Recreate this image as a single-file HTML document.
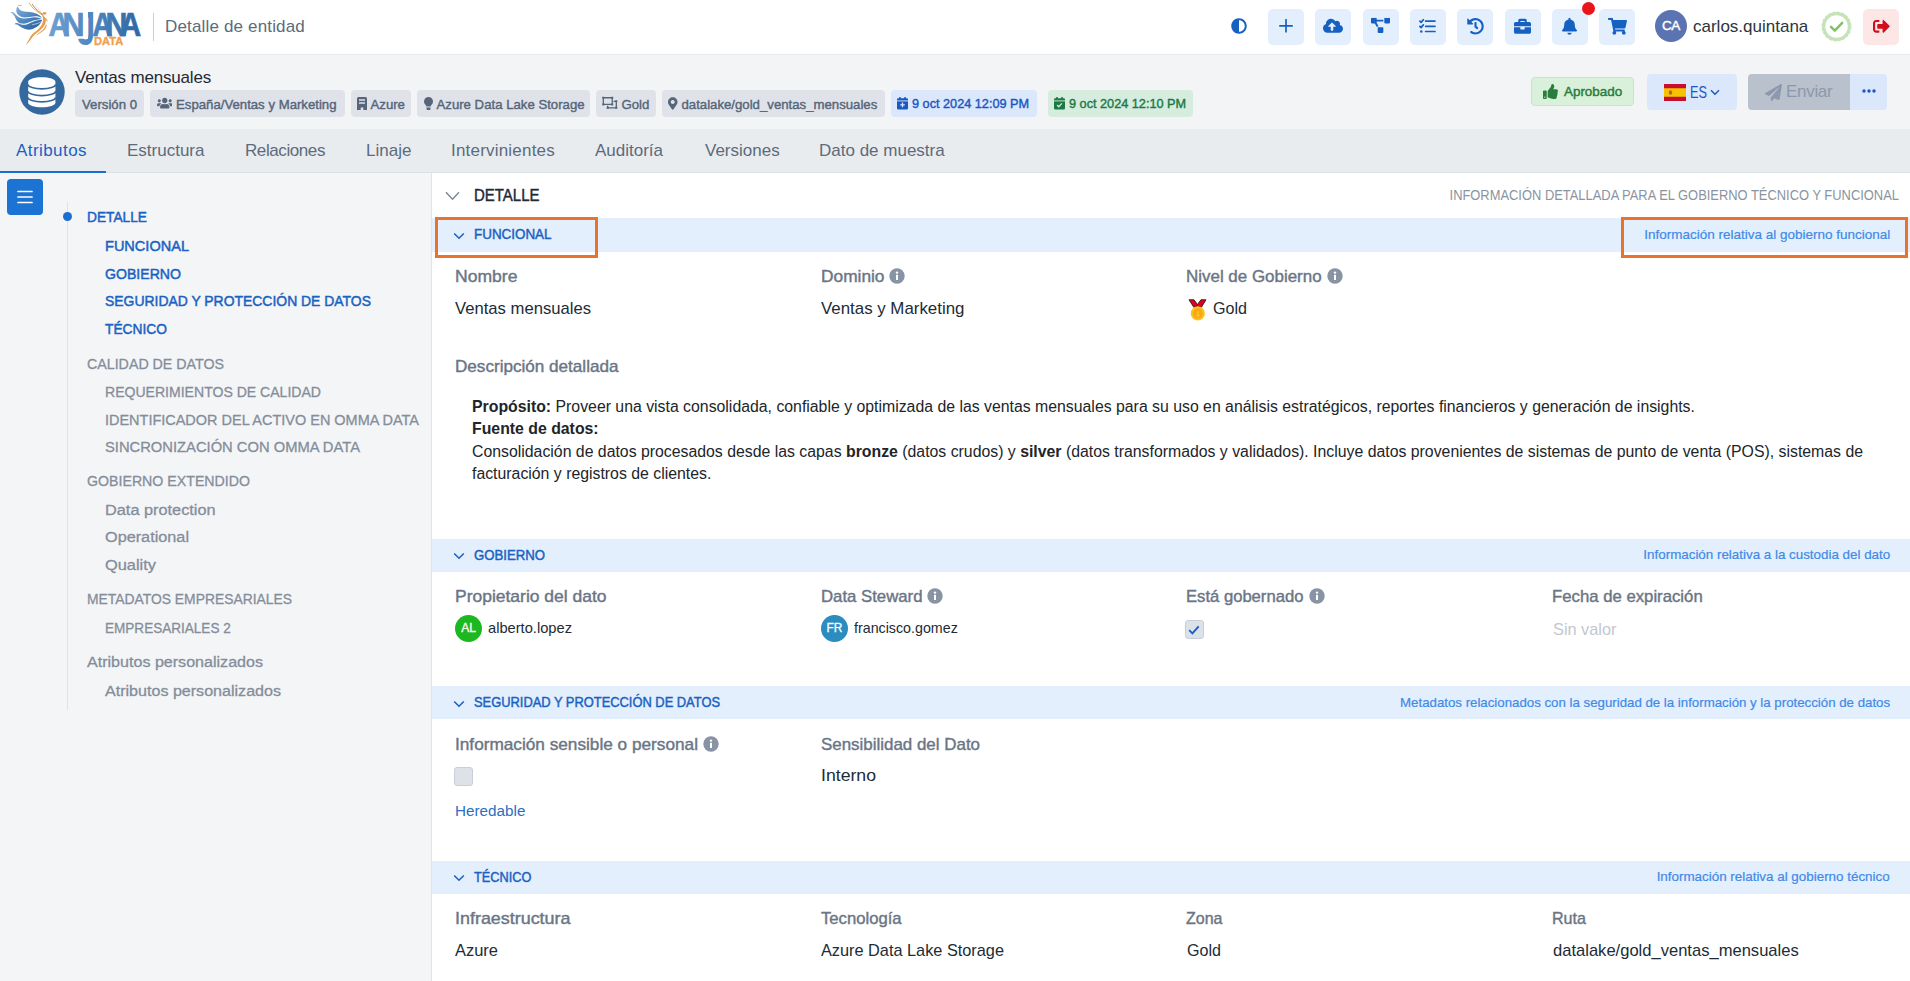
<!DOCTYPE html>
<html lang="es">
<head>
<meta charset="utf-8">
<title>Detalle de entidad</title>
<style>
*{box-sizing:border-box;margin:0;padding:0}
html,body{width:1910px;height:981px;overflow:hidden;background:#f3f4f6;font-family:"Liberation Sans",sans-serif;color:#212b36}
.abs{position:absolute}
.nw{white-space:nowrap}
.sb{-webkit-text-stroke:.45px currentColor}
/* ---------- top bar ---------- */
#top{position:absolute;left:0;top:0;width:1910px;height:55px;background:#fff;border-bottom:1px solid #e6e9ee}
#top .divider{position:absolute;left:153px;top:13px;width:1px;height:28px;background:#c9d0d9}
#top .ptitle{position:absolute;left:165px;top:16px;font-size:17px;line-height:22px;color:#5b6b7c;letter-spacing:.16px;white-space:nowrap}
.tbtn{position:absolute;top:9px;width:36px;height:36px;border-radius:5px;background:#e3effd;display:flex;align-items:center;justify-content:center}
.tbtn svg{display:block;transform:translateY(-1.200px)}
/* ---------- entity bar ---------- */
#ent{position:absolute;left:0;top:56px;width:1910px;height:73px;background:#f3f4f6}
.chip{position:absolute;top:34px;height:27px;border-radius:4px;background:#dfe3e9;color:#56657a;font-size:13.2px;line-height:27px;white-space:nowrap;-webkit-text-stroke:.4px currentColor}
.chip svg{position:absolute}
.chip span{position:absolute;top:.500px}
/* ---------- tabs ---------- */
#tabs{z-index:2;position:absolute;left:0;top:129px;width:1910px;height:44px;background:#e9ecef;border-bottom:1px solid #dde1e6}
#tabs .tab{position:absolute;top:11px;font-size:17px;line-height:22px;color:#5b6b7c;white-space:nowrap}
#tabs .tab.on{color:#1a5fc4}
#tabs .ul{position:absolute;left:0;top:42.400px;width:106px;height:2px;background:#1d6cd2}
/* ---------- sidebar ---------- */
#side{position:absolute;left:0;top:173px;width:431px;height:808px;background:#f4f5f7}
#side .menu{position:absolute;left:7px;top:5.500px;width:36px;height:36px;border-radius:4px;background:#1b73d3}
#side .vline{position:absolute;left:66.600px;top:29px;width:1px;height:508px;background:#dfe3e8}
#side .dot{position:absolute;left:62.700px;top:39.400px;width:9px;height:9px;border-radius:50%;background:#1b6fd0}
.ti{position:absolute;font-size:15.5px;line-height:20px;white-space:nowrap;color:#848d9a;-webkit-text-stroke:.3px currentColor}
.ti.b{color:#1a62c2;-webkit-text-stroke:.5px currentColor}
.ti.g{left:86.600px}
.ti.s{left:104.600px}
/* ---------- content ---------- */
#main{position:absolute;left:431px;top:173px;width:1479px;height:808px;background:#fff;border-left:1px solid #e1e5ea}
.bar{position:absolute;left:0;width:1478px;height:34px;background:#e4effd}
.bar .t{position:absolute;left:42px;top:6.300px;font-size:13.900px;line-height:20px;color:#1a62c2;white-space:nowrap;-webkit-text-stroke:.45px currentColor}
.bar .r{position:absolute;right:20px;top:7.600px;font-size:12.8px;line-height:18px;color:#3f8ae8;white-space:nowrap;-webkit-text-stroke:.2px currentColor}
.bar svg{position:absolute;left:21.200px;top:13.400px}
.lb{position:absolute;font-size:16.4px;line-height:22px;color:#6a7585;white-space:nowrap;-webkit-text-stroke:.4px currentColor}
.vl{position:absolute;font-size:17px;line-height:22px;color:#212b36;white-space:nowrap}
.info{display:inline-block;vertical-align:-2px;margin-left:5px}
.hl{position:absolute;border:3px solid #e9732c}
.av{position:absolute;width:27px;height:27px;border-radius:50%;color:#fff;font-size:12px;line-height:27px;text-align:center;-webkit-text-stroke:.3px currentColor}
.un{position:absolute;font-size:15px;line-height:20px;color:#212b36;white-space:nowrap}
.cb{position:absolute;width:19px;height:19px;border-radius:3px;background:#dde1e8;border:1px solid #c9cfd8}
#desc{position:absolute;left:40px;top:222.500px;width:1420px;font-size:15.830px;line-height:22.550px;color:#212529}
#desc b{font-weight:700}
</style>
</head>
<body>
<!-- TOP BAR -->
<div id="top">
  <svg id="logo" class="abs" style="left:0;top:0" width="150" height="55" viewBox="0 0 150 55">
  <defs>
    <linearGradient id="lg1" gradientUnits="userSpaceOnUse" x1="49" y1="0" x2="141" y2="0"><stop offset="0" stop-color="#6ea0d2"/><stop offset=".5" stop-color="#4c84bd"/><stop offset="1" stop-color="#2f66a3"/></linearGradient>
    <clipPath id="jc"><path d="M88 0h7v52H70V38.800h18z"/></clipPath>
    <linearGradient id="lg2" gradientUnits="userSpaceOnUse" x1="20" y1="6" x2="36" y2="30"><stop offset="0" stop-color="#7fabd9"/><stop offset=".5" stop-color="#4f86c0"/><stop offset="1" stop-color="#2a62a1"/></linearGradient>
  </defs>
  <g fill="url(#lg2)">
    <path d="M17.800 6.300C15.500 9 15.800 13 19 15.600c2 1.600 4.500 2 8 1.700 4-.3 6.500-1.500 10-1 2 .3 3.800 1 5 1.900-1.500-2.700-4.500-4.700-9-5.700-4-.9-8.500-.2-11.500-1.700-2-1-3.300-2.600-3.700-4.500z"/>
    <path d="M18 5.300l4-.3-.5.800-3.200.2z"/>
    <path d="M10.400 12.200c1.600-.7 3.100 0 4.400 1.600 2.200 2.700 4.700 4.500 8.700 4.700 4.500.2 7.500-1.300 11-1.300 3 0 5.500.8 7.700 2.100-4.200-.3-7.700.7-11.200 2.200-3.500 1.500-6 2.700-9.500 2.100-2.500-.4-4-1.600-4.800-3.100-1.700-3-2.200-6.500-6.300-8.300z"/>
    <path d="M14.400 24.500c.8-1.300 2.100-1.700 3.400-1.200 2.200 1 4.700 1.900 7.700 1.400 3.500-.6 6.500-2.900 10-3.900 2.500-.7 4.700-.8 6.700-.6-.7 2.300-2.700 4.800-5.700 6.800s-6.500 3-9.500 2.500c-3.500-.6-6.500-2.500-9-4.500-1.200-.8-2.200-1-3.600-.5z"/>
  </g>
  <path d="M32.500 24.600c3.500-.5 6.500-1.500 9.200-3" fill="none" stroke="#fff" stroke-width=".55" stroke-linecap="round"/>
  <g fill="#ea9c4b">
    <path d="M43.300 15.500c2.200 2 3.200 4.500 2.200 7.500-.7 2.500-2.500 4.500-4.500 6.500-3 3-6.500 4.500-8.500 7.500s-4 6-6.600 7.900c1.600-2.900 3.100-5.400 4.600-8.400s5-4.500 7.500-7 4.500-5.500 5-8.500c.3-2-.2-4-.8-5.200z"/>
    <path d="M46.500 24.500c.5 2.500-1 4.500-3.500 6.500s-5 3.500-7.400 4.500c2.400-2 5.400-4 7.400-6 1.800-1.800 2.800-3.500 2.600-4.900z"/>
    <path d="M45 17.500c2 1 3 2.800 2.300 4.500-.5-1-1.300-2.500-2.500-3.500z"/>
    <ellipse cx="44.600" cy="13.300" rx="1.800" ry="1.350"/>
  </g>
  <g fill="none" stroke-linecap="round">
    <path d="M42.700 15.300C38 12 32 8.500 29.200 3.300" stroke="#ea9c4b" stroke-width=".9"/>
    <path d="M43.200 14.800C39.500 12 35 9 32.300 4.300" stroke="#a2662f" stroke-width=".75"/>
    <path d="M41.500 12.200c-2-2.500-3.500-4.600-5.900-5.800" stroke="#f0b87f" stroke-width=".45"/>
  </g>
  <g font-family="Liberation Sans, sans-serif" font-weight="700" fill="url(#lg1)" stroke="url(#lg1)" stroke-width=".7" font-size="32.850" lengthAdjust="spacingAndGlyphs">
    <text x="48.500" y="35.950" textLength="21" lengthAdjust="spacingAndGlyphs">A</text>
    <text x="62.600" y="35.950" textLength="22" lengthAdjust="spacingAndGlyphs">N</text>
    <text x="76.900" y="45" font-size="47.600" stroke-width="0" clip-path="url(#jc)" textLength="18.230" lengthAdjust="spacingAndGlyphs">J</text>
    <text x="92.560" y="35.950" textLength="19.830" lengthAdjust="spacingAndGlyphs">A</text>
    <text x="105.600" y="35.950" textLength="21.900" lengthAdjust="spacingAndGlyphs">N</text>
    <text x="120.100" y="35.950" textLength="21.100" lengthAdjust="spacingAndGlyphs">A</text>
  </g>
  <text x="94" y="45.200" font-family="Liberation Sans, sans-serif" font-weight="700" font-size="10" fill="#f0a04c" stroke="#f0a04c" stroke-width=".3" textLength="29.300" lengthAdjust="spacingAndGlyphs">DATA</text>
</svg>
  <div class="divider"></div>
  <div class="ptitle">Detalle de entidad</div>
  <div id="topicons">
  <svg class="abs" style="left:1231px;top:18.300px" width="16" height="16" viewBox="0 0 512 512"><path fill="#1660c2" d="M8 256c0 136.966 111.033 248 248 248s248-111.034 248-248S392.966 8 256 8 8 119.033 8 256zm248 184V72c101.705 0 184 82.311 184 184 0 101.705-82.311 184-184 184z"/></svg>
  <div class="tbtn" style="left:1268px"><svg width="14" height="14" viewBox="0 0 14 14"><path d="M7 .8v12.4M.8 7h12.4" stroke="#1660c2" stroke-width="1.7" stroke-linecap="round" fill="none"/></svg></div>
  <div class="tbtn" style="left:1315.3px"><svg width="20" height="16" viewBox="0 0 640 512"><path fill="#1660c2" d="M537.6 226.6c4.1-10.7 6.4-22.4 6.4-34.6 0-53-43-96-96-96-19.7 0-38.1 6-53.3 16.2C367 64.2 315.3 32 256 32c-88.4 0-160 71.6-160 160 0 2.7.1 5.4.2 8.1C40.2 219.8 0 273.2 0 336c0 79.5 64.5 144 144 144h368c70.700 0 128-57.3 128-128 0-61.9-44-113.600-102.400-125.400zM393.400 288H328v112c0 8.800-7.200 16-16 16h-48c-8.800 0-16-7.200-16-16V288h-65.400c-14.300 0-21.400-17.200-11.300-27.300l105.400-105.400c6.200-6.200 16.400-6.200 22.600 0l105.400 105.400c10.100 10.100 2.900 27.300-11.300 27.300z"/></svg></div>
  <div class="tbtn" style="left:1362.6px"><svg width="19" height="15.2" viewBox="0 0 640 512"><path fill="#1660c2" d="M384 320H256c-17.670 0-32 14.330-32 32v128c0 17.670 14.330 32 32 32h128c17.670 0 32-14.330 32-32V352c0-17.670-14.330-32-32-32zM192 32c0-17.670-14.330-32-32-32H32C14.330 0 0 14.330 0 32v128c0 17.670 14.330 32 32 32h95.720l73.160 128.040C211.980 300.980 232.400 288 256 288h.280L192 175.510V128h224V64H192V32zM608 0H480c-17.670 0-32 14.330-32 32v128c0 17.670 14.330 32 32 32h128c17.670 0 32-14.330 32-32V32c0-17.670-14.330-32-32-32z"/></svg></div>
  <div class="tbtn" style="left:1409.9px"><svg width="17" height="15" viewBox="0 0 17 15"><g fill="none" stroke="#1660c2" stroke-width="1.7" stroke-linecap="round" stroke-linejoin="round"><path d="M6.6 2.3H16M6.6 7.5H16M6.6 12.700H16"/><path d="M.9 2.400l1.200 1.200L4.300.900M.9 7.600l1.200 1.200 2.200-2.700"/></g><circle cx="2.300" cy="12.700" r="1.250" fill="#1660c2"/></svg></div>
  <div class="tbtn" style="left:1457.2px"><svg width="17" height="17" viewBox="0 0 512 512"><path fill="#1660c2" d="M504 255.531c.253 136.640-111.180 248.372-247.820 248.468-59.015.042-113.223-20.530-155.822-54.911-11.077-8.940-11.905-25.541-1.839-35.607l11.267-11.267c8.609-8.609 22.353-9.551 31.891-1.984C173.062 425.135 212.781 440 256 440c101.705 0 184-82.311 184-184 0-101.705-82.311-184-184-184-48.814 0-93.149 18.969-126.068 49.932l50.754 50.754c10.080 10.080 2.941 27.314-11.313 27.314H24c-8.837 0-16-7.163-16-16V38.627c0-14.254 17.234-21.393 27.314-11.314l49.372 49.372C129.209 34.136 189.552 8 256 8c136.810 0 247.747 110.780 248 247.531zm-180.912 78.784l9.823-12.630c8.138-10.463 6.253-25.542-4.210-33.679L288 256.349V152c0-13.255-10.745-24-24-24h-16c-13.255 0-24 10.745-24 24v135.651l65.409 50.874c10.463 8.137 25.541 6.253 33.679-4.210z"/></svg></div>
  <div class="tbtn" style="left:1504.5px"><svg width="17" height="17" viewBox="0 0 512 512"><path fill="#1660c2" d="M320 336c0 8.840-7.160 16-16 16h-96c-8.840 0-16-7.160-16-16v-48H0v144c0 25.600 22.400 48 48 48h416c25.600 0 48-22.400 48-48V288H320v48zm144-208h-80V80c0-25.600-22.400-48-48-48H176c-25.600 0-48 22.400-48 48v48H48c-25.600 0-48 22.400-48 48v80h512v-80c0-25.600-22.400-48-48-48zm-144 0H192V96h128v32z"/></svg></div>
  <div class="tbtn" style="left:1551.8px"><svg width="15" height="17" viewBox="0 0 448 512"><path fill="#1660c2" d="M224 512c35.320 0 63.970-28.650 63.970-64H160.030c0 35.350 28.650 64 63.970 64zm215.390-149.710c-19.320-20.760-55.470-51.990-55.470-154.290 0-77.700-54.480-139.900-127.940-155.160V32c0-17.670-14.320-32-31.980-32s-31.980 14.330-31.980 32v20.840C118.560 68.100 64.080 130.300 64.080 208c0 102.300-36.150 133.530-55.470 154.290-6 6.450-8.660 14.160-8.610 21.710.11 16.400 12.980 32 32.100 32h383.800c19.120 0 32-15.600 32.100-32 .05-7.550-2.610-15.270-8.610-21.710z"/></svg></div>
  <div class="abs" style="left:1582px;top:2px;width:13px;height:13px;border-radius:50%;background:#e8151b"></div>
  <div class="tbtn" style="left:1599.1px"><svg width="19" height="17" viewBox="0 0 576 512"><path fill="#1660c2" d="M528.120 301.319l47.273-208C578.806 78.301 567.391 64 551.990 64H159.208l-9.166-44.810C147.758 8.021 137.930 0 126.529 0H24C10.745 0 0 10.745 0 24v16c0 13.255 10.745 24 24 24h69.883l70.248 343.435C147.325 417.100 136 435.222 136 456c0 30.928 25.072 56 56 56s56-25.072 56-56c0-15.674-6.447-29.835-16.824-40h209.647C430.447 426.165 424 440.326 424 456c0 30.928 25.072 56 56 56s56-25.072 56-56c0-22.172-12.888-41.332-31.579-50.405l5.517-24.276c3.413-15.018-8.002-29.319-23.403-29.319H218.117l-6.545-32h293.145c11.206 0 20.920-7.754 23.403-18.681z"/></svg></div>
  <div class="abs" style="left:1655px;top:10px;width:32px;height:32px;border-radius:50%;background:#5b73b1;color:#fff;font-size:13.5px;line-height:32px;text-align:center;-webkit-text-stroke:.4px #fff;letter-spacing:-.3px">CA</div>
  <div class="abs nw" style="left:1693px;top:16px;font-size:17px;line-height:22px;color:#2a3542">carlos.quintana</div>
  <svg class="abs" style="left:1821px;top:11px" width="31" height="31" viewBox="0 0 31 31"><circle cx="15.5" cy="15.5" r="12.800" fill="#fff" stroke="#c5e3b8" stroke-width="3.200"/><circle cx="15.500" cy="15.500" r="14.300" fill="none" stroke="#c5e3b8" stroke-width="1.400" stroke-dasharray="2.800 1.700"/><path d="M10 15.800l3.800 3.800 7.400-7.800" fill="none" stroke="#7fc163" stroke-width="2.400" stroke-linecap="round" stroke-linejoin="round"/></svg>
  <div class="tbtn" style="left:1863px;background:#fde6e6"><svg width="17" height="17" viewBox="0 0 512 512"><path fill="#d10f1c" d="M497 273L329 441c-15 15-41 4.500-41-17v-96H152c-13.300 0-24-10.700-24-24v-96c0-13.300 10.700-24 24-24h136V88c0-21.400 25.900-32 41-17l168 168c9.300 9.400 9.300 24.600 0 34zM192 436v-40c0-6.600-5.400-12-12-12H96c-17.700 0-32-14.300-32-32V160c0-17.700 14.300-32 32-32h84c6.600 0 12-5.400 12-12V76c0-6.600-5.400-12-12-12H96c-53 0-96 43-96 96v192c0 53 43 96 96 96h84c6.600 0 12-5.400 12-12z"/></svg></div>
</div>
</div>
<!-- ENTITY BAR -->
<div id="ent">
  <svg class="abs" style="left:18.600px;top:12.900px" width="46" height="46" viewBox="0 0 46 46"><circle cx="23" cy="23" r="22.700" fill="#34699f"/><path fill="#fff" d="M9.200 12.800C9.200 10.300 15.300 8.300 22.800 8.300s13.600 2 13.600 4.500v21c0 2.500-6.100 4.500-13.600 4.500S9.200 36.300 9.200 33.800z"/><g fill="none" stroke="#34699f" stroke-width="1.700"><path d="M9 15.400A13.800 4.400 0 0 0 36.600 15.400"/><path d="M9 22.200A13.800 4.400 0 0 0 36.600 22.200"/><path d="M9 28.400A13.800 4.400 0 0 0 36.600 28.400"/></g></svg>
  <div class="abs nw" style="left:75px;top:11px;font-size:17px;line-height:22px;color:#1f2a37;letter-spacing:-.18px">Ventas mensuales</div>
  <div class="chip" style="left:75px;width:69px;"><span style="left:7px">Versión 0</span></div>
  <div class="chip" style="left:149.5px;width:195.5px;"><svg style="left:7px;top:6.500px" width="15.500" height="12.400" viewBox="0 0 640 512"><path fill="#56657a" d="M96 224c35.300 0 64-28.700 64-64s-28.700-64-64-64-64 28.700-64 64 28.700 64 64 64zm448 0c35.300 0 64-28.700 64-64s-28.700-64-64-64-64 28.700-64 64 28.700 64 64 64zm32 32h-64c-17.600 0-33.500 7.100-45.100 18.600 40.300 22.100 68.900 62 75.100 109.400h66c17.700 0 32-14.300 32-32v-32c0-35.300-28.700-64-64-64zm-256 0c61.900 0 112-50.100 112-112S381.900 32 320 32 208 82.100 208 144s50.100 112 112 112zm76.800 32h-8.300c-20.800 10-43.900 16-68.500 16s-47.600-6-68.500-16h-8.300C179.600 288 128 339.600 128 403.200V432c0 26.500 21.500 48 48 48h288c26.500 0 48-21.500 48-48v-28.800c0-63.600-51.600-115.200-115.200-115.200zm-223.700-13.400C161.500 263.100 145.600 256 128 256H64c-35.300 0-64 28.700-64 64v32c0 17.700 14.300 32 32 32h65.900c6.300-47.400 34.900-87.300 75.200-109.400z"/></svg><span style="left:26.5px">España/Ventas y Marketing</span></div>
  <div class="chip" style="left:351px;width:60px;"><svg style="left:6px;top:7px" width="10" height="13" viewBox="0 0 10 13"><path fill="#56657a" d="M1.500 0h7A1.500 1.500 0 0 1 10 1.500V13H6.300v-2.600H3.700V13H0V1.500A1.500 1.500 0 0 1 1.500 0zM2 2.300v1.500h6V2.300zM2 5.200v1.500h6V5.200z"/></svg><span style="left:19.5px">Azure</span></div>
  <div class="chip" style="left:417px;width:172.5px;"><svg style="left:7px;top:7px" width="9" height="13" viewBox="0 0 9 13"><path fill="#56657a" d="M4.500 0A4.500 4.500 0 0 0 0 4.500c0 1.500.8 2.600 1.600 3.600.4.500.7 1 .8 1.500h4.200c.1-.5.400-1 .8-1.500C8.200 7.100 9 6 9 4.500A4.500 4.500 0 0 0 4.500 0zM2.500 10.500h4v1.200c0 .7-.6 1.300-1.300 1.300H3.800c-.7 0-1.300-.6-1.300-1.300z"/></svg><span style="left:19.5px">Azure Data Lake Storage</span></div>
  <div class="chip" style="left:595.5px;width:60.0px;"><svg style="left:6.500px;top:6px" width="15.800" height="13" viewBox="0 0 17 14"><g fill="none" stroke="#56657a" stroke-width="1.400"><path d="M1.400 1.900h9.600v7.200H1.400z"/><path d="M12.400 5.700h3v7H6.100v-2.300"/></g><g fill="#56657a"><path d="M.3.800h2.200v2.200H.3zM9.900.800h2.200v2.200H9.900zM.3 8h2.200v2.200H.3zM9.900 8h2.200v2.200H9.900zM14.300 4.600h2.200v2.200h-2.200zM14.300 11.600h2.200v2.200h-2.200zM5 11.600h2.200v2.200H5z"/></g></svg><span style="left:26.0px">Gold</span></div>
  <div class="chip" style="left:662px;width:223px;"><svg style="left:6px;top:7px" width="9.500" height="13" viewBox="0 0 384 512"><path fill="#56657a" d="M172.268 501.670C26.970 291.031 0 269.413 0 192 0 85.961 85.961 0 192 0s192 85.961 192 192c0 77.413-26.970 99.031-172.268 309.670-9.535 13.774-29.930 13.773-39.464 0zM192 272c44.183 0 80-35.817 80-80s-35.817-80-80-80-80 35.817-80 80 35.817 80 80 80z"/></svg><span style="left:19.5px">datalake/gold_ventas_mensuales</span></div>
  <div class="chip" style="left:891px;width:145.5px;background:#dbe7fb;color:#1a56c4;font-size:12.700px"><svg style="left:6px;top:7px" width="11" height="12.500" viewBox="0 0 11 12.500"><path fill="#1a56c4" d="M2.200 0h1.500v1.300h3.600V0h1.500v1.300h1A1.200 1.200 0 0 1 11 2.500v8.800a1.200 1.200 0 0 1-1.200 1.200H1.200A1.200 1.200 0 0 1 0 11.300V2.500a1.200 1.200 0 0 1 1.200-1.200h1z"/><path d="M0 3.900h11" stroke="#dbe7fb" stroke-width=".9"/><path d="M5.500 5.600v4.600M3.200 7.900h4.600" stroke="#dbe7fb" stroke-width="1.300"/></svg><span style="left:21px">9 oct 2024 12:09 PM</span></div>
  <div class="chip" style="left:1048px;width:145px;background:#d6ecdf;color:#1b7a43;font-size:12.700px"><svg style="left:6px;top:7px" width="11" height="12.500" viewBox="0 0 11 12.500"><path fill="#1b7a43" d="M2.200 0h1.500v1.300h3.600V0h1.500v1.300h1A1.200 1.200 0 0 1 11 2.500v8.800a1.200 1.200 0 0 1-1.200 1.200H1.200A1.200 1.200 0 0 1 0 11.300V2.500a1.200 1.200 0 0 1 1.200-1.200h1z"/><path d="M0 3.900h11" stroke="#d6ecdf" stroke-width=".9"/><path d="M3.100 8l1.700 1.700 3.100-3.300" fill="none" stroke="#d6ecdf" stroke-width="1.300"/></svg><span style="left:21px">9 oct 2024 12:10 PM</span></div>
  <div class="abs" style="left:1531px;top:21px;width:103px;height:29px;border-radius:4px;background:#d9f0da;border:1px solid #c4e6c6"><svg class="abs" style="left:11px;top:6px" width="15" height="15" viewBox="0 0 512 512"><path fill="#2a7d3a" d="M104 224H24c-13.255 0-24 10.745-24 24v240c0 13.255 10.745 24 24 24h80c13.255 0 24-10.745 24-24V248c0-13.255-10.745-24-24-24zM64 472c-13.255 0-24-10.745-24-24s10.745-24 24-24 24 10.745 24 24-10.745 24-24 24zM384 81.452c0 42.416-25.970 66.208-33.277 94.548h101.723c33.397 0 59.397 27.746 59.553 58.098.084 17.938-7.546 37.249-19.439 49.197l-.110.110c9.836 23.337 8.237 56.037-9.308 79.469 8.681 25.895-.069 57.704-16.382 74.757 4.298 17.598 2.244 32.575-6.148 44.632C440.202 511.587 389.616 512 346.839 512l-2.845-.001c-48.287-.017-87.806-17.598-119.560-31.725-15.957-7.099-36.821-15.887-52.651-16.178-6.540-.120-11.783-5.457-11.783-11.998v-213.770c0-3.200 1.282-6.271 3.558-8.521 39.614-39.144 56.648-80.587 89.117-113.111 14.804-14.832 20.188-37.236 25.393-58.902C282.515 39.293 291.817 0 312 0c24 0 72 8 72 81.452z"/></svg><span class="abs nw" style="left:32px;top:5px;font-size:13.400px;line-height:18px;color:#2a7d3a;-webkit-text-stroke:.45px #2a7d3a">Aprobado</span></div>
  <div class="abs" style="left:1646.500px;top:18px;width:90px;height:36px;border-radius:4px;background:#dbe7fb"><svg class="abs" style="left:17px;top:9.500px" width="22" height="17" viewBox="0 0 22 16" preserveAspectRatio="none"><rect width="22" height="16" fill="#c8102e"/><rect y="4" width="22" height="8" fill="#f6c300"/><ellipse cx="6.500" cy="8" rx="1.700" ry="2.100" fill="#b5651d"/></svg><span class="abs nw" style="left:43px;top:8px;font-size:16.500px;line-height:20px;color:#1a56c4;transform:scaleX(.77);transform-origin:left center">ES</span><svg class="abs" style="left:63px;top:15px" width="10" height="7" viewBox="0 0 10 7"><path d="M1 1.200l4 4 4-4" fill="none" stroke="#1a56c4" stroke-width="1.400"/></svg></div>
  <div class="abs" style="left:1748px;top:18px;width:102px;height:36px;border-radius:4px 0 0 4px;background:#b9c1cd"><svg class="abs" style="left:17px;top:10px" width="17" height="17" viewBox="0 0 512 512"><path fill="#8c98ab" d="M476 3.200L12.500 270.600c-18.100 10.400-15.800 35.600 2.200 43.200L121 358.400l287.300-253.200c5.500-4.900 13.300 2.600 8.600 8.300L176 407v80.500c0 23.600 28.500 32.900 42.500 15.800L282 426l124.600 52.200c14.200 6 30.400-2.900 33-18.200l72-432C515 7.800 493.300-6.800 476 3.200z"/></svg><span class="abs nw" style="left:38px;top:7px;font-size:17px;line-height:22px;color:#8c98ab;letter-spacing:-.300px">Enviar</span></div>
  <div class="abs" style="left:1850px;top:18px;width:37px;height:36px;border-radius:0 4px 4px 0;background:#dbe7fb"><svg class="abs" style="left:12px;top:15px" width="14" height="4" viewBox="0 0 14 4"><circle cx="2" cy="2" r="1.700" fill="#1a56c4"/><circle cx="7" cy="2" r="1.700" fill="#1a56c4"/><circle cx="12" cy="2" r="1.700" fill="#1a56c4"/></svg></div>
</div>
<!-- TABS -->
<div id="tabs">
  <div class="tab on" style="left:16px;letter-spacing:.43px">Atributos</div>
  <div class="tab" style="left:127px">Estructura</div>
  <div class="tab" style="left:245px;letter-spacing:-.41px">Relaciones</div>
  <div class="tab" style="left:366px">Linaje</div>
  <div class="tab" style="left:451px;letter-spacing:.2px">Intervinientes</div>
  <div class="tab" style="left:595px">Auditoría</div>
  <div class="tab" style="left:705px">Versiones</div>
  <div class="tab" style="left:819px">Dato de muestra</div>
  <div class="ul"></div>
</div>
<!-- SIDEBAR -->
<!--SIDE-->
<div id="side">
  <div class="menu"><svg class="abs" style="left:10px;top:11px" width="16" height="14" viewBox="0 0 16 14"><path d="M1 1.500h14M1 7h14M1 12.500h14" stroke="#fff" stroke-width="1.700" stroke-linecap="round"/></svg></div>
  <div class="vline"></div>
  <div class="dot"></div>
  <div class="ti g b" style="top:34px;transform:scaleX(0.8852);transform-origin:left center">DETALLE</div>
  <div class="ti s b" style="top:63px;transform:scaleX(0.9377);transform-origin:left center">FUNCIONAL</div>
  <div class="ti s b" style="top:90.5px;transform:scaleX(0.9097);transform-origin:left center">GOBIERNO</div>
  <div class="ti s b" style="top:118px;transform:scaleX(0.8986);transform-origin:left center">SEGURIDAD Y PROTECCIÓN DE DATOS</div>
  <div class="ti s b" style="top:145.5px;transform:scaleX(0.8889);transform-origin:left center">TÉCNICO</div>
  <div class="ti g" style="top:180.5px;transform:scaleX(0.9176);transform-origin:left center">CALIDAD DE DATOS</div>
  <div class="ti s" style="top:208.5px;transform:scaleX(0.9064);transform-origin:left center">REQUERIMIENTOS DE CALIDAD</div>
  <div class="ti s" style="top:236.5px;transform:scaleX(0.9333);transform-origin:left center">IDENTIFICADOR DEL ACTIVO EN OMMA DATA</div>
  <div class="ti s" style="top:263.5px;transform:scaleX(0.9511);transform-origin:left center">SINCRONIZACIÓN CON OMMA DATA</div>
  <div class="ti g" style="top:298px;transform:scaleX(0.9143);transform-origin:left center">GOBIERNO EXTENDIDO</div>
  <div class="ti s" style="top:327px;transform:scaleX(1.0521);transform-origin:left center">Data protection</div>
  <div class="ti s" style="top:354px;transform:scaleX(1.0482);transform-origin:left center">Operational</div>
  <div class="ti s" style="top:382px;transform:scaleX(1.057);transform-origin:left center">Quality</div>
  <div class="ti g" style="top:416px;transform:scaleX(0.8948);transform-origin:left center">METADATOS EMPRESARIALES</div>
  <div class="ti s" style="top:445px;transform:scaleX(0.8738);transform-origin:left center">EMPRESARIALES 2</div>
  <div class="ti g" style="top:479px;transform:scaleX(1.0368);transform-origin:left center">Atributos personalizados</div>
  <div class="ti s" style="top:508px;transform:scaleX(1.0368);transform-origin:left center">Atributos personalizados</div>
</div>
<!--/SIDE-->
<!-- MAIN -->
<!--MAIN-->
<div id="main">
<svg class="abs" style="left:13px;top:17.5px" width="15" height="10" viewBox="0 0 15 10"><path d="M1 1.200l6.500 7 6.500-7" fill="none" stroke="#7a8798" stroke-width="1.400"/></svg>
<div class="abs nw sb" style="left:41.8px;top:11px;font-size:17.2px;line-height:22px;color:#212b36;transform:scaleX(0.8715);transform-origin:left center">DETALLE</div>
<div class="abs nw" style="right:11.5px;top:12px;font-size:14.5px;line-height:20px;color:#8a94a1;transform:scaleX(0.89);transform-origin:right center">INFORMACIÓN DETALLADA PARA EL GOBIERNO TÉCNICO Y FUNCIONAL</div>
<div class="bar" style="top:45.2px;height:34px"><svg width="12" height="8" viewBox="0 0 12 8"><path d="M1.200 1.500l4.800 4.700 4.800-4.700" fill="none" stroke="#1a62c2" stroke-width="1.600"/></svg><span class="t" style="transform:scaleX(0.9655);transform-origin:left center">FUNCIONAL</span><span class="r" style="transform:scaleX(1.0543);transform-origin:right center">Información relativa al gobierno funcional</span></div>
<div class="hl" style="left:3px;top:44px;width:163px;height:41px"></div>
<div class="hl" style="left:1189px;top:44px;width:287px;height:41px"></div>
<div class="lb" style="left:22.8px;top:92px;transform:scaleX(1.0704);transform-origin:left center">Nombre</div>
<div class="lb" style="left:388.5px;top:92px;transform:scaleX(1.0561);transform-origin:left center">Dominio</div><svg class="abs" style="left:457.0px;top:95px" width="16" height="16" viewBox="0 0 16 16"><circle cx="8" cy="8" r="7.700" fill="#8893a3"/><rect x="7" y="6.800" width="2" height="5.200" rx=".3" fill="#fff"/><circle cx="8" cy="4.600" r="1.200" fill="#fff"/></svg>
<div class="lb" style="left:754.3px;top:92px;transform:scaleX(1.0335);transform-origin:left center">Nivel de Gobierno</div><svg class="abs" style="left:894.9px;top:95px" width="16" height="16" viewBox="0 0 16 16"><circle cx="8" cy="8" r="7.700" fill="#8893a3"/><rect x="7" y="6.800" width="2" height="5.200" rx=".3" fill="#fff"/><circle cx="8" cy="4.600" r="1.200" fill="#fff"/></svg>
<div class="vl" style="left:23px;top:124.80000000000001px;transform:scaleX(0.979);transform-origin:left center;">Ventas mensuales</div>
<div class="vl" style="left:389.3px;top:124.80000000000001px;transform:scaleX(0.9919);transform-origin:left center;">Ventas y Marketing</div>
<svg class="abs" style="left:756px;top:126px" width="20" height="22" viewBox="0 0 20 22"><path d="M1 .8h5l5.100 7-5.300.4z" fill="#e3001b" stroke="#2b1c22" stroke-width=".9" stroke-linejoin="round"/><path d="M18 .8h-5.100l-5 7 5.500.4z" fill="#e3001b" stroke="#2b1c22" stroke-width=".9" stroke-linejoin="round"/><circle cx="9.800" cy="14.400" r="7.100" fill="#fcc419"/><circle cx="9.800" cy="14.500" r="5" fill="#f9a61a"/><path d="M8.300 13.200l1.700-1.400h.8v4.500h1.200v1.100H8v-1.100h1.300v-2.900l-1 .7z" fill="#fcc61f"/></svg>
<div class="vl" style="left:781.4px;top:124.80000000000001px;transform:scaleX(0.9465);transform-origin:left center;">Gold</div>
<div class="lb" style="left:22.8px;top:182.4px;transform:scaleX(1.0433);transform-origin:left center">Descripción detallada</div>
<div id="desc"><p><b>Propósito:</b> Proveer una vista consolidada, confiable y optimizada de las ventas mensuales para su uso en análisis estratégicos, reportes financieros y generación de insights.</p><p><b>Fuente de datos:</b></p><p>Consolidación de datos procesados desde las capas <b>bronze</b> (datos crudos) y <b>silver</b> (datos transformados y validados). Incluye datos provenientes de sistemas de punto de venta (POS), sistemas de facturación y registros de clientes.</p></div>
<div class="bar" style="top:365.7px;height:33.7px"><svg width="12" height="8" viewBox="0 0 12 8"><path d="M1.200 1.500l4.800 4.700 4.800-4.700" fill="none" stroke="#1a62c2" stroke-width="1.600"/></svg><span class="t" style="transform:scaleX(0.9482);transform-origin:left center">GOBIERNO</span><span class="r" style="transform:scaleX(1.045);transform-origin:right center">Información relativa a la custodia del dato</span></div>
<div class="lb" style="left:22.8px;top:412px;transform:scaleX(1.0657);transform-origin:left center">Propietario del dato</div>
<div class="lb" style="left:388.5px;top:412px;transform:scaleX(1.022);transform-origin:left center">Data Steward</div><svg class="abs" style="left:495.0px;top:415px" width="16" height="16" viewBox="0 0 16 16"><circle cx="8" cy="8" r="7.700" fill="#8893a3"/><rect x="7" y="6.800" width="2" height="5.200" rx=".3" fill="#fff"/><circle cx="8" cy="4.600" r="1.200" fill="#fff"/></svg>
<div class="lb" style="left:754.3px;top:412px;transform:scaleX(1.0143);transform-origin:left center">Está gobernado</div><svg class="abs" style="left:876.7px;top:415px" width="16" height="16" viewBox="0 0 16 16"><circle cx="8" cy="8" r="7.700" fill="#8893a3"/><rect x="7" y="6.800" width="2" height="5.200" rx=".3" fill="#fff"/><circle cx="8" cy="4.600" r="1.200" fill="#fff"/></svg>
<div class="lb" style="left:1119.6px;top:412px;transform:scaleX(1.0209);transform-origin:left center">Fecha de expiración</div>
<div class="av" style="left:23px;top:442px;background:#1cb81f">AL</div>
<div class="un" style="left:56.1px;top:444.7px;transform:scaleX(0.9778);transform-origin:left center">alberto.lopez</div>
<div class="av" style="left:389px;top:442px;background:#2a8cbf">FR</div>
<div class="un" style="left:421.9px;top:444.7px;transform:scaleX(0.9504);transform-origin:left center">francisco.gomez</div>
<div class="cb" style="left:752.7px;top:446.5px"><svg class="abs" style="left:2.500px;top:4px" width="12" height="10" viewBox="0 0 12 10"><path d="M1.200 5.200l3.200 3.200 6.300-7" fill="none" stroke="#1a5fc4" stroke-width="1.900"/></svg></div>
<div class="vl" style="left:1120.8px;top:445.8px;transform:scaleX(0.9601);transform-origin:left center;color:#c2c7cf">Sin valor</div>
<div class="bar" style="top:513.2px;height:32.6px"><svg width="12" height="8" viewBox="0 0 12 8"><path d="M1.200 1.500l4.800 4.700 4.800-4.700" fill="none" stroke="#1a62c2" stroke-width="1.600"/></svg><span class="t" style="transform:scaleX(0.9274);transform-origin:left center">SEGURIDAD Y PROTECCIÓN DE DATOS</span><span class="r" style="transform:scaleX(1.0358);transform-origin:right center">Metadatos relacionados con la seguridad de la información y la protección de datos</span></div>
<div class="lb" style="left:22.8px;top:559.5px;transform:scaleX(1.05);transform-origin:left center">Información sensible o personal</div><svg class="abs" style="left:270.8px;top:562.5px" width="16" height="16" viewBox="0 0 16 16"><circle cx="8" cy="8" r="7.700" fill="#8893a3"/><rect x="7" y="6.800" width="2" height="5.200" rx=".3" fill="#fff"/><circle cx="8" cy="4.600" r="1.200" fill="#fff"/></svg>
<div class="lb" style="left:388.5px;top:559.5px;transform:scaleX(1.0325);transform-origin:left center">Sensibilidad del Dato</div>
<div class="cb" style="left:22px;top:594px"></div>
<div class="vl" style="left:389.3px;top:592.2px;transform:scaleX(1.039);transform-origin:left center;">Interno</div>
<div class="abs nw" style="left:22.8px;top:628.4px;font-size:15.5px;line-height:20px;color:#2b6fc4;transform:scaleX(0.9856);transform-origin:left center">Heredable</div>
<div class="bar" style="top:687.8px;height:33.7px"><svg width="12" height="8" viewBox="0 0 12 8"><path d="M1.200 1.500l4.800 4.700 4.800-4.700" fill="none" stroke="#1a62c2" stroke-width="1.600"/></svg><span class="t" style="transform:scaleX(0.9166);transform-origin:left center">TÉCNICO</span><span class="r" style="transform:scaleX(1.0465);transform-origin:right center">Información relativa al gobierno técnico</span></div>
<div class="lb" style="left:22.8px;top:734.3px;transform:scaleX(1.0928);transform-origin:left center">Infraestructura</div>
<div class="lb" style="left:388.6px;top:734.3px;transform:scaleX(1.0166);transform-origin:left center">Tecnología</div>
<div class="lb" style="left:754.3px;top:734.3px;transform:scaleX(0.9743);transform-origin:left center">Zona</div>
<div class="lb" style="left:1120px;top:734.3px;transform:scaleX(0.9819);transform-origin:left center">Ruta</div>
<div class="vl" style="left:23px;top:766.5px;transform:scaleX(0.968);transform-origin:left center;">Azure</div>
<div class="vl" style="left:389.3px;top:766.5px;transform:scaleX(0.9586);transform-origin:left center;">Azure Data Lake Storage</div>
<div class="vl" style="left:755px;top:766.5px;transform:scaleX(0.9465);transform-origin:left center;">Gold</div>
<div class="vl" style="left:1120.8px;top:766.5px;transform:scaleX(0.9737);transform-origin:left center;">datalake/gold_ventas_mensuales</div>
</div>
<!--/MAIN-->
</body>
</html>
